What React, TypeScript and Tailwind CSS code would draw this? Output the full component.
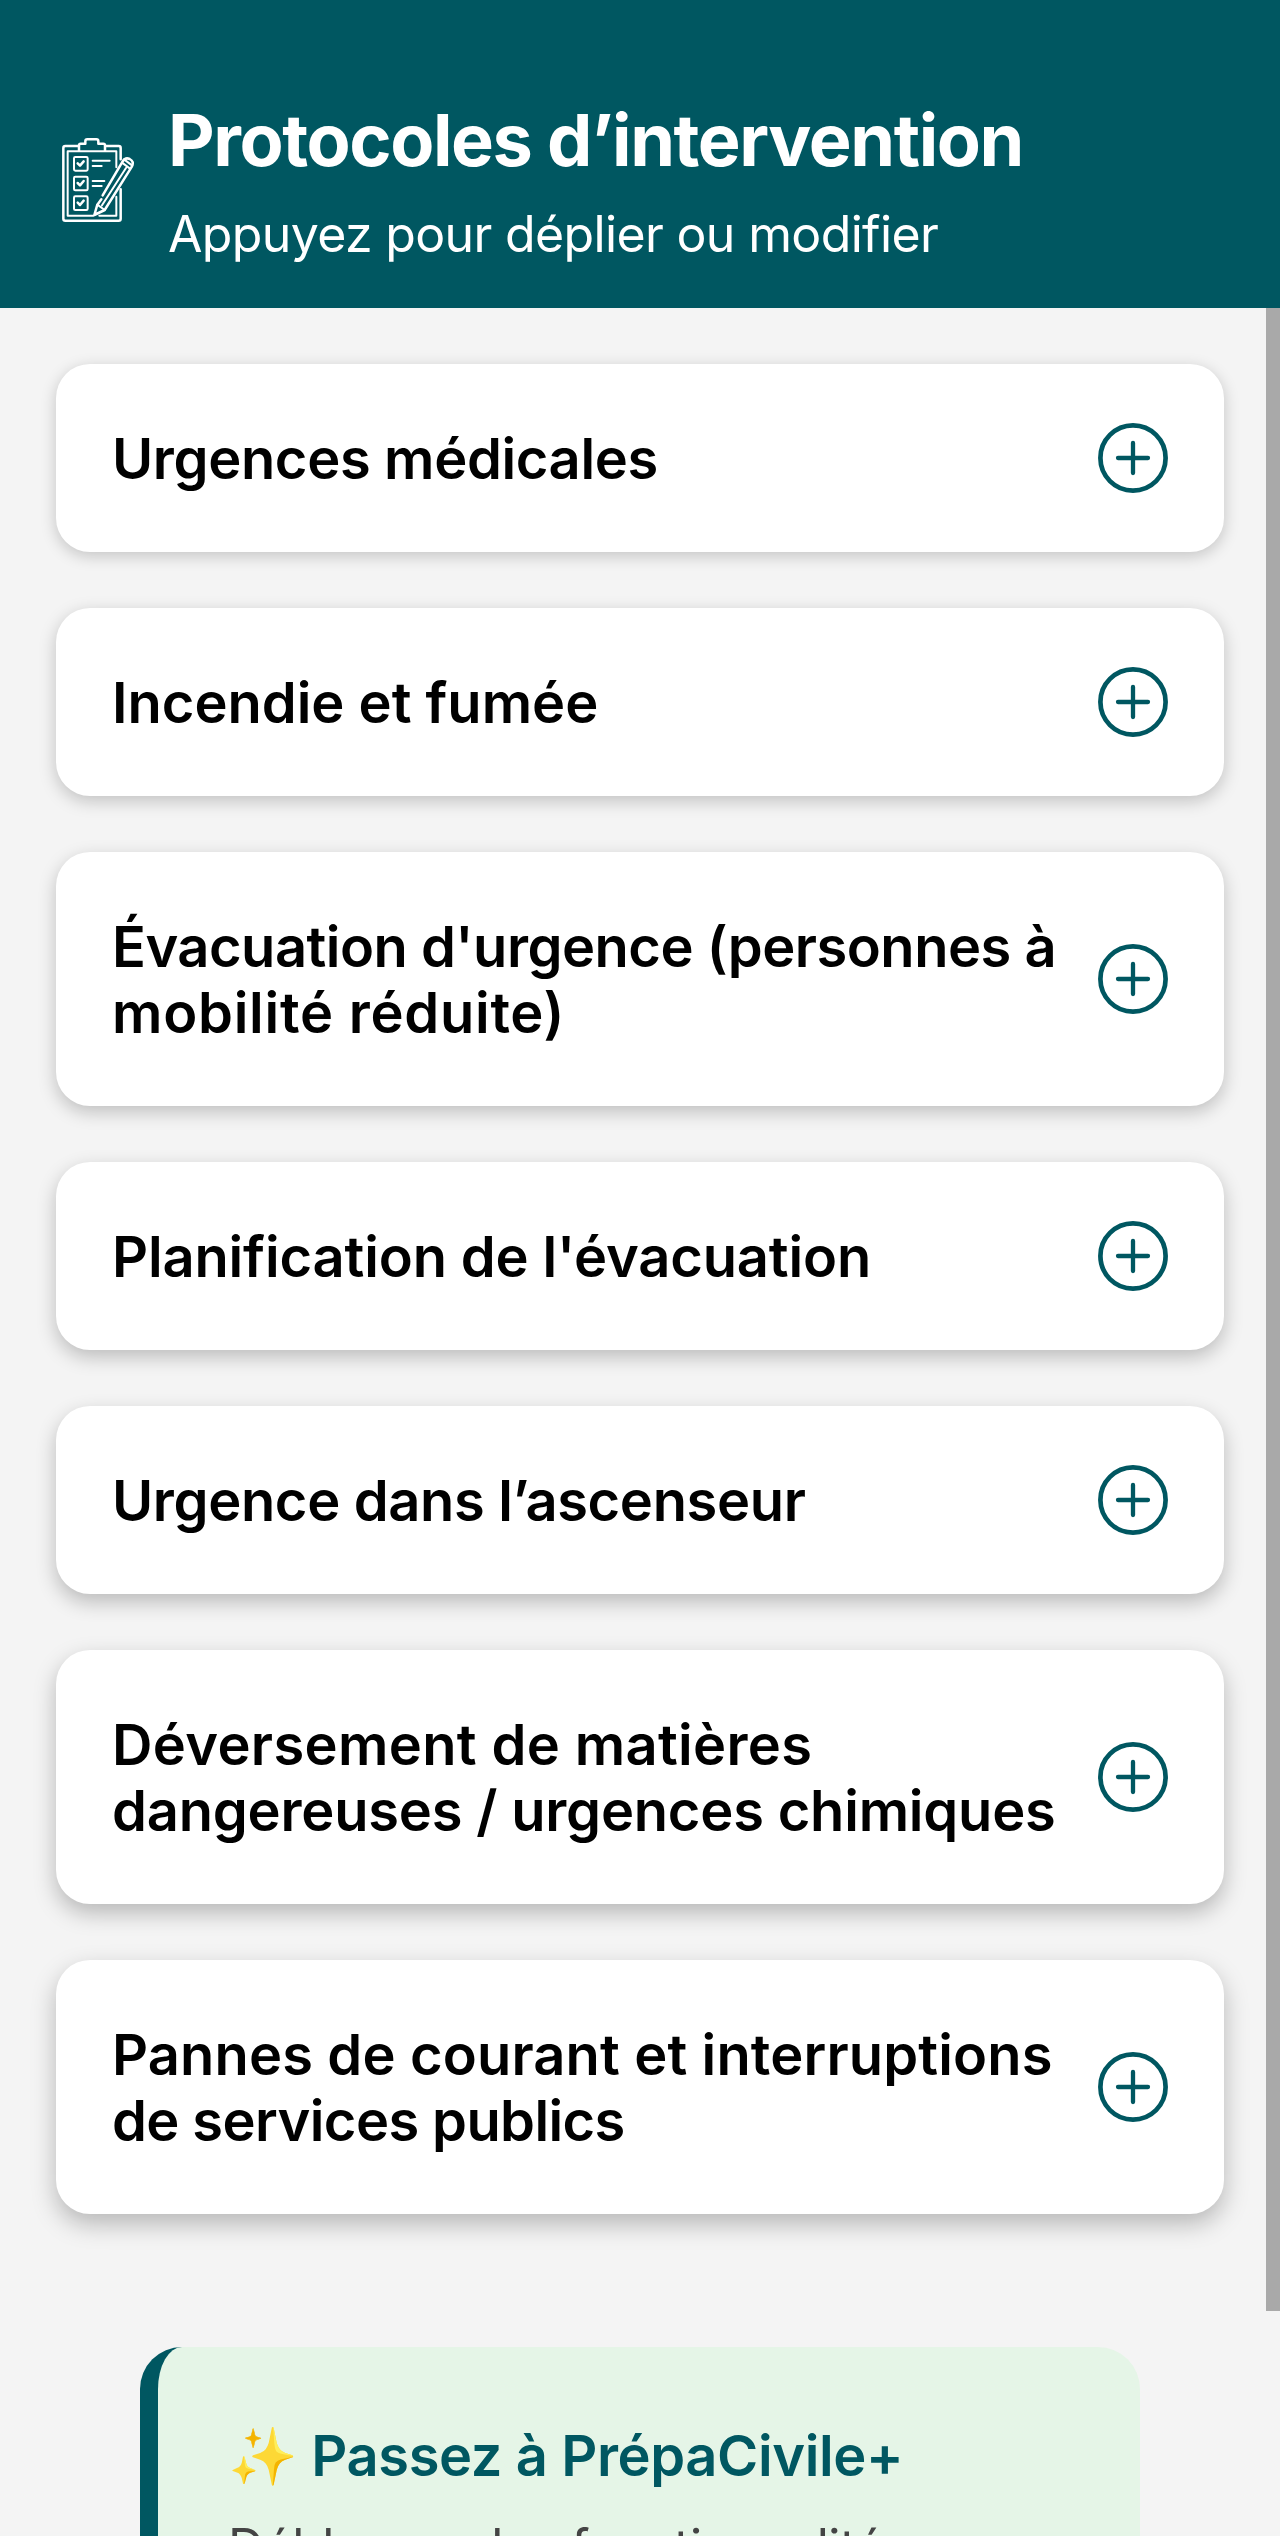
const protocols = [
  {
    lines: [{ text: "Urgences médicales", tracking: "tracking-[-0.35px]" }],
    shadow: "shadow-[0_4px_16px_rgba(0,0,0,0.2)]",
  },
  {
    lines: [{ text: "Incendie et fumée", tracking: "tracking-normal" }],
    shadow: "shadow-[0_5px_17px_rgba(0,0,0,0.21)]",
  },
  {
    lines: [
      { text: "Évacuation d'urgence (personnes à", tracking: "tracking-[-0.5px]" },
      { text: "mobilité réduite)", tracking: "tracking-[0.75px]" },
    ],
    shadow: "shadow-[0_6px_18px_rgba(0,0,0,0.22)]",
  },
  {
    lines: [{ text: "Planification de l'évacuation", tracking: "tracking-[-0.15px]" }],
    shadow: "shadow-[0_7px_19px_rgba(0,0,0,0.23)]",
  },
  {
    lines: [{ text: "Urgence dans l’ascenseur", tracking: "tracking-[-0.35px]" }],
    shadow: "shadow-[0_8px_20px_rgba(0,0,0,0.24)]",
  },
  {
    lines: [
      { text: "Déversement de matières", tracking: "tracking-[0.35px]" },
      { text: "dangereuses / urgences chimiques", tracking: "tracking-[-0.2px]" },
    ],
    shadow: "shadow-[0_9px_22px_rgba(0,0,0,0.25)]",
  },
  {
    lines: [
      { text: "Pannes de courant et interruptions", tracking: "tracking-[0.15px]" },
      { text: "de services publics", tracking: "tracking-[-0.6px]" },
    ],
    shadow: "shadow-[0_10px_24px_rgba(0,0,0,0.25)]",
  },
];

function ClipboardIcon() {
  return (
    <svg
      viewBox="48 54 252 252"
      className="w-[84px] h-[84px] shrink-0"
      fill="none"
      stroke="white"
      strokeWidth="7.5"
      strokeLinecap="round"
      strokeLinejoin="round"
    >
      {/* board */}
      <path d="M116 78H76q-6 0-6 6V296q0 6 6 6H236q6 0 6-6V208" />
      <path d="M242 118V84q0-6-6-6H196" />
      <path d="M160 287H83V94H229V142" strokeWidth="6" />
      <path d="M229 230V287H178" strokeWidth="6" />
      <path d="M117 92V76q0-5 5-5H136V64q0-6 6-6H169q6 0 6 6V71H190q5 0 5 5V92" />
      {/* checkboxes */}
      <g strokeWidth="6">
        <rect x="102" y="111" width="41" height="41" rx="4" />
        <rect x="102" y="170" width="41" height="41" rx="4" />
        <rect x="102" y="229" width="41" height="41" rx="4" />
        <path d="M158 122H209M158 138H185M158 183H193M158 198H185" />
      </g>
      <path d="M113 130l7 7 11-13M113 189l7 7 11-13M113 248l7 7 11-13" />
      {/* pencil */}
      <path d="M188 226L248 124Q256 111 269 117Q283 124 276 139L194 270L163 285L172 254L184 238" />
      <path d="M246 128L270 146M252 118L277 137M258 144L186 256M172 254L194 270" strokeWidth="6" />
    </svg>
  );
}

function PlusIcon() {
  return (
    <svg
      viewBox="0 0 70 70"
      className="w-[70px] h-[70px] -my-1 shrink-0"
      fill="none"
      stroke="#005761"
      strokeLinecap="round"
    >
      <circle cx="35" cy="35" r="32.6" strokeWidth="4.7" />
      <path d="M35 20V50M20 35H50" strokeWidth="4.3" />
    </svg>
  );
}

export default function App() {
  return (
    <div className="relative w-[1280px] h-[2536px] overflow-hidden bg-[#f4f4f4] font-[Inter,sans-serif]">
      <header className="flex items-center gap-7 h-[308px] px-14 pt-24 pb-11 bg-[#005761] text-white">
        <ClipboardIcon />
        <div>
          <h1 className="text-[72px] leading-[88px] font-bold tracking-[-1.4px] whitespace-nowrap">
            Protocoles d’intervention
          </h1>
          <p className="mt-5 text-[50px] leading-[60px] tracking-[-0.65px] whitespace-nowrap">
            Appuyez pour déplier ou modifier
          </p>
        </div>
      </header>

      <main>
        <div className="flex flex-col gap-14 p-14">
          {protocols.map((item, index) => (
            <button
              key={index}
              className={`flex items-center justify-between px-14 py-[61px] rounded-[34px] bg-white text-left ${item.shadow}`}
            >
              <span className="mt-px -mb-px text-[56px] leading-[66px] font-semibold text-black whitespace-nowrap">
                {item.lines.map((line) => (
                  <span key={line.text} className={`block ${line.tracking}`}>
                    {line.text}
                  </span>
                ))}
              </span>
              <PlusIcon />
            </button>
          ))}
        </div>

        <section className="mx-[140px] mt-[77px] h-[400px] pl-[70px] pt-[75px] rounded-[42px] border-l-[18px] border-[#005761] bg-[#e5f5e7]">
          <h2 className="text-[56px] leading-[68px] font-semibold tracking-[-0.4px] text-[#005761] whitespace-nowrap">
            ✨ Passez à PrépaCivile+
          </h2>
          <p className="mt-[27px] text-[50px] leading-[60px] tracking-[-0.5px] text-[#444] whitespace-nowrap">
            Débloquez les fonctionnalités
          </p>
        </section>
      </main>

      {/* scroll thumb */}
      <div className="absolute right-0 top-[308px] w-3.5 h-[2003px] bg-[#a9a9a9]" />
    </div>
  );
}
